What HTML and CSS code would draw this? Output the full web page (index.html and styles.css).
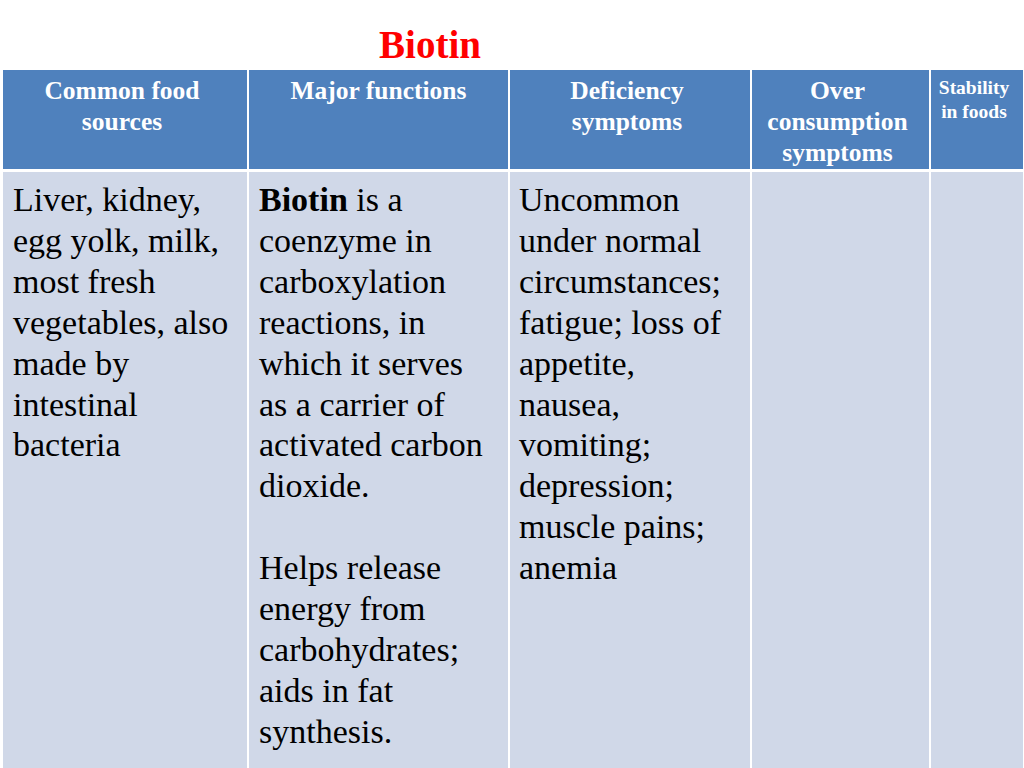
FILE: index.html
```html
<!DOCTYPE html>
<html>
<head>
<meta charset="utf-8">
<link rel="stylesheet" href="styles.css">
</head>
<body>
<div class="title">Biotin</div>
<div class="table">
  <div class="th">Common food<br>sources</div>
  <div class="th mid">Major functions</div>
  <div class="th">Deficiency<br>symptoms</div>
  <div class="th">Over<br>consumption<br>symptoms</div>
  <div class="th small">Stability<br>in foods</div>
  <div class="td">Liver, kidney,<br>egg yolk, milk,<br>most fresh<br>vegetables, also<br>made by<br>intestinal<br>bacteria</div>
  <div class="td"><b>Biotin</b> is a<br>coenzyme in<br>carboxylation<br>reactions, in<br>which it serves<br>as a carrier of<br>activated carbon<br>dioxide.<br><br>Helps release<br>energy from<br>carbohydrates;<br>aids in fat<br>synthesis.</div>
  <div class="td narrow">Uncommon<br>under normal<br>circumstances;<br>fatigue; loss of<br>appetite,<br>nausea,<br>vomiting;<br>depression;<br>muscle pains;<br>anemia</div>
  <div class="td"></div>
  <div class="td"></div>
</div>
</body>
</html>
```
FILE: styles.css
```css
html, body {
  margin: 0;
  padding: 0;
  background: #ffffff;
  overflow: hidden;
}
body {
  width: 1024px;
  height: 768px;
  font-family: "Liberation Serif", "Times New Roman", serif;
}
.title {
  box-sizing: border-box;
  width: 860px;
  height: 70px;
  padding-top: 21px;
  text-align: center;
  color: #ff0000;
  font-family: "Liberation Serif", "Times New Roman", serif;
  font-weight: bold;
  font-size: 39px;
  line-height: 47px;
}
.table {
  display: grid;
  grid-template-columns: 244px 259px 240px 177px 92px;
  grid-template-rows: 99px 600px;
  column-gap: 2px;
  row-gap: 3px;
  padding-left: 3px;
  background: #ffffff;
}
.th {
  box-sizing: border-box;
  background: #4f81bd;
  color: #ffffff;
  font-family: "Liberation Serif", "Times New Roman", serif;
  font-weight: bold;
  font-size: 25.5px;
  line-height: 31px;
  text-align: center;
  padding: 5px 6px 0 0;
}
.th.mid {
  padding-right: 0;
}
.th.small {
  font-size: 19.5px;
  line-height: 24px;
  padding-top: 6px;
}
.td {
  box-sizing: border-box;
  background: #d0d8e8;
  color: #000000;
  font-family: "Liberation Serif", "Times New Roman", serif;
  font-size: 34px;
  line-height: 40.9px;
  padding: 8px 0 0 10px;
  white-space: nowrap;
  overflow: hidden;
}
.td.narrow {
  padding-left: 9px;
}
```
